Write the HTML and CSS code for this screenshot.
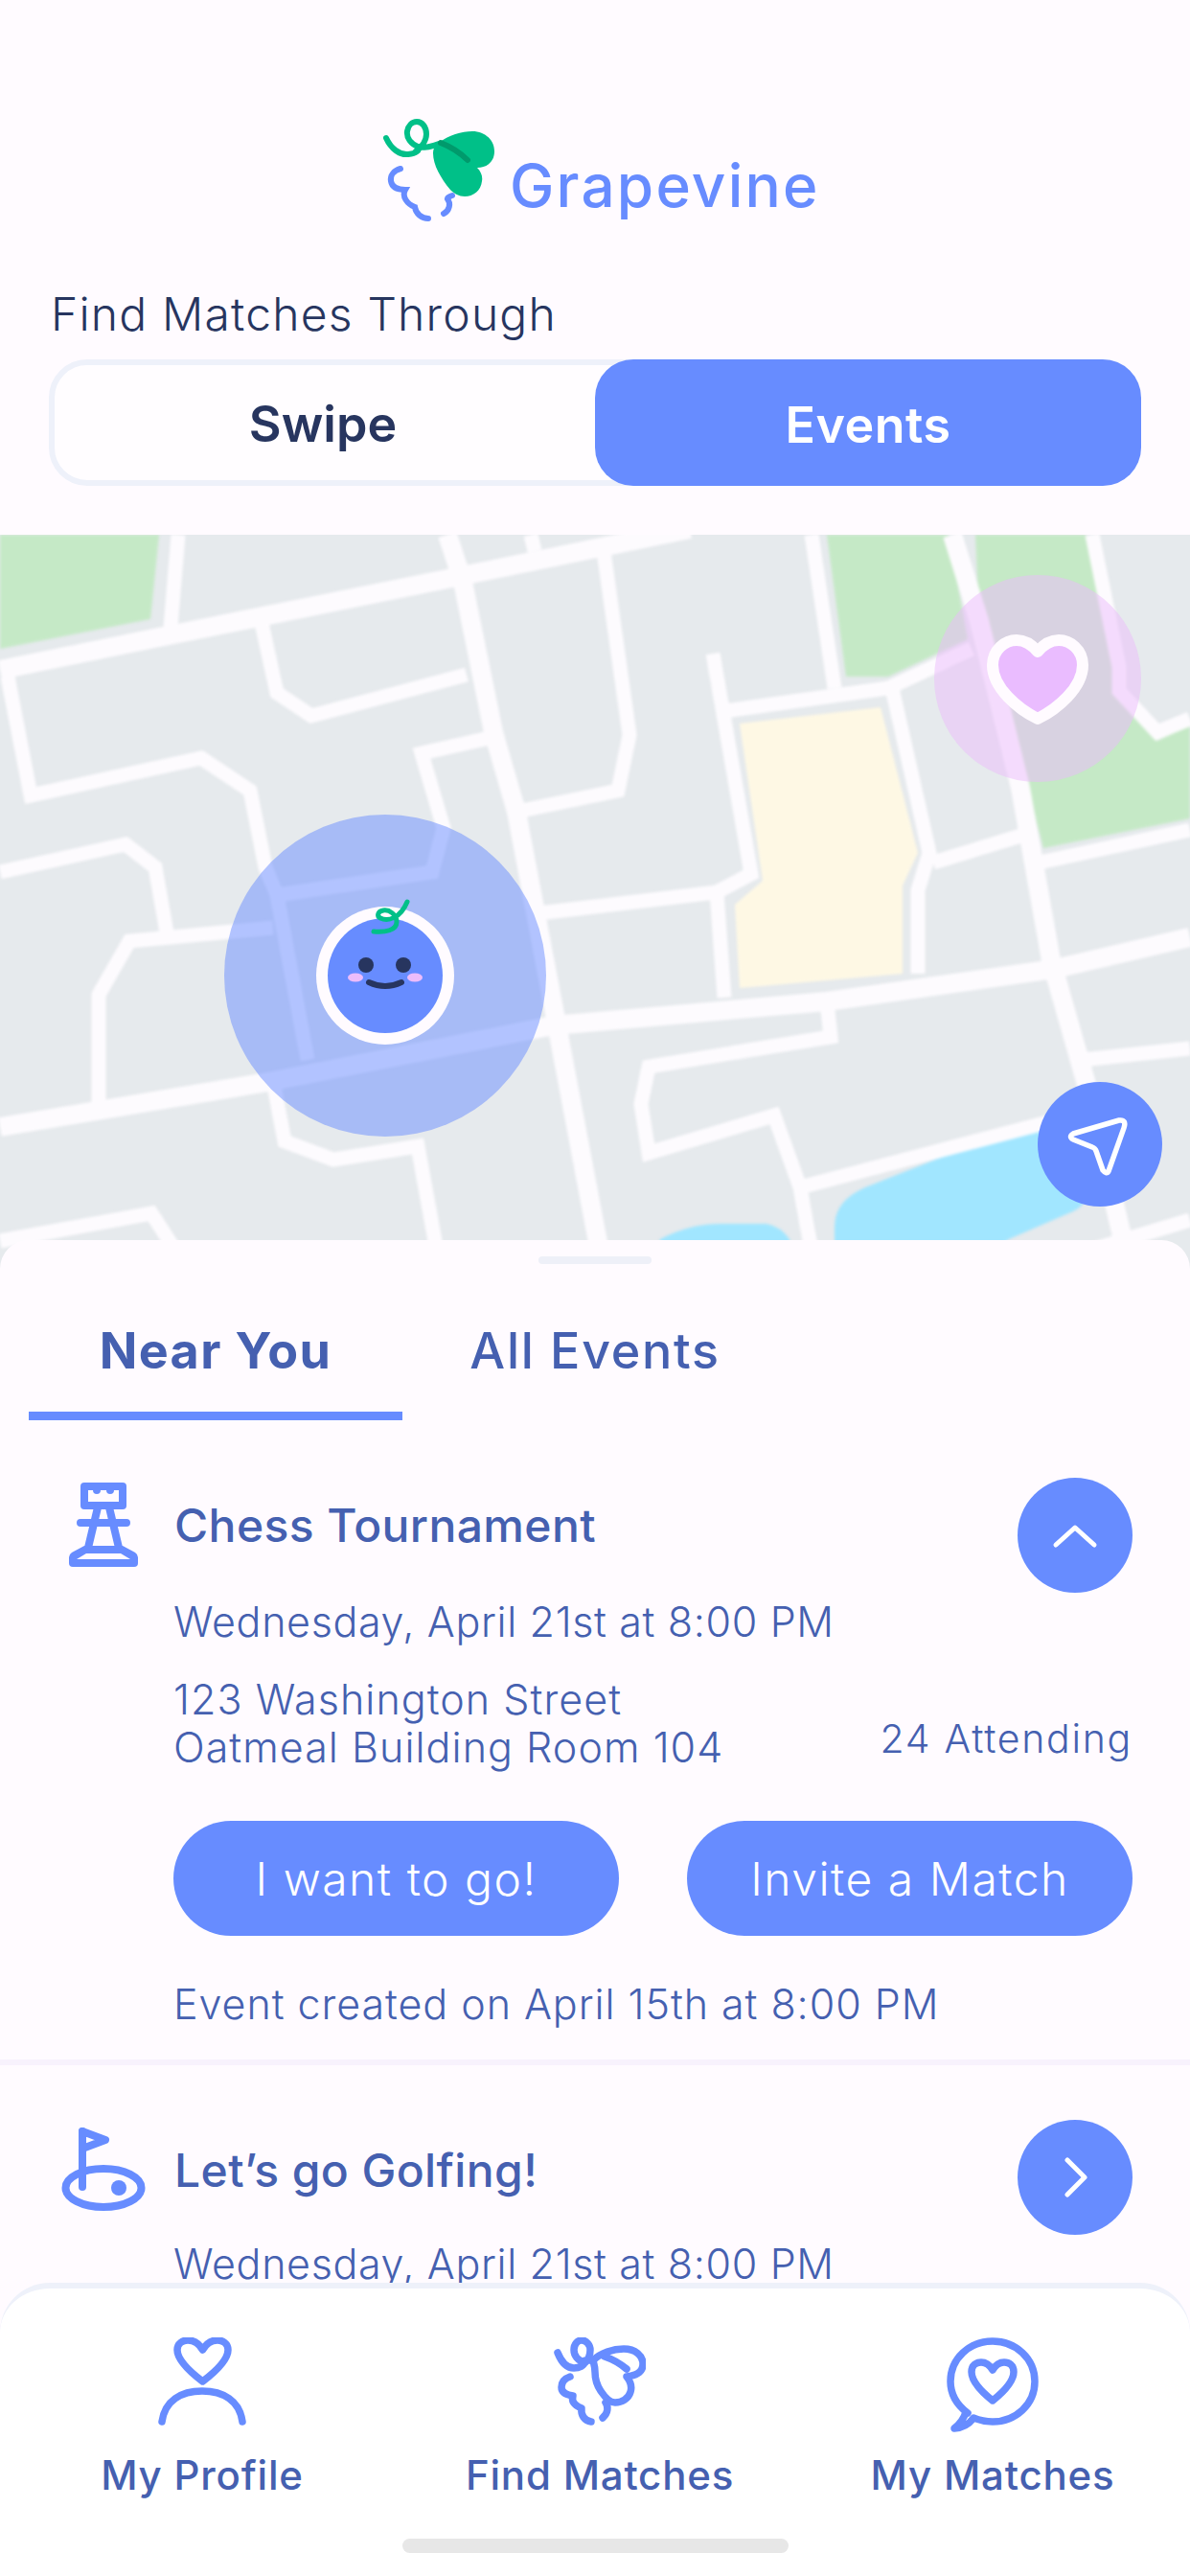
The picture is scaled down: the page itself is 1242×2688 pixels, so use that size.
FILE: index.html
```html
<!DOCTYPE html>
<html lang="en">
<head>
  <meta charset="UTF-8" />
  <meta name="viewport" content="width=device-width, initial-scale=1" />
  <title>Grapevine</title>
  <link rel="stylesheet" href="styles.css">
</head>
<body>
<div class="page">
  <header class="logo">
    <svg class="logo-mark" viewBox="0 0 120 115" width="120" height="115">
      <path class="vine" d="M3 24C8 35 17 42 26 41C34 40 39 37 36 33C29 30 24 24 25 17C26 11 30 7 35 7C41 7 45 13 45 20C45 28 38 35 34 38M38 33C44 35 50 33 58 30"/>
      <path class="leaf" d="M58 29C68 21 82 17 93 17C106 17 116 26 116 38C116 49 108 55 98 55C102 59 104 64 103 69C102 79 94 85 85 85C79 85 74 82 70 78C60 66 52 52 52 40C52 35 54 32 58 29Z"/>
      <path class="leaf-vein" d="M60 29C70 33 80 39 88 47"/>
      <path class="grape" d="M18 56C11 58 7 63 8 69C9 75 14 78 23 78C19 85 25 93 33 96C34 103 40 108 47 108M72 84C69 85 66 87 67 88C71 92 69 100 63 103"/>
    </svg>
    <span class="logo-text">Grapevine</span>
  </header>

  <p class="find-label">Find Matches Through</p>
  <div class="toggle">
    <button class="toggle-btn">Swipe</button>
    <button class="toggle-btn active">Events</button>
  </div>

  <section class="map">
    <svg class="map-art" viewBox="0 0 1242 770" width="1242" height="770">
      <g class="map-blur">
        <path class="park" d="M0 0H166L157 88L0 119Z"/>
        <path class="park" d="M863 0H990L1010 109L927 148H883Z"/>
        <path class="park" d="M1018 0H1133L1168 140V165L1208 215L1242 198V296L1089 327L1065 235L1022 90Z"/>
        <path class="plaza" d="M772 197L919 180L958 332L942 366V458L772 473L767 386L796 361Z"/>
        <path class="water" d="M871 770V722Q871 695 903 681L1133 590V690Q1133 700 1120 706L1053 735L1000 770Z"/>
        <path class="water" d="M680 770L689 735Q720 719 752 719H800Q815 722 824 735L830 770Z"/>
        <path class="road" d="M0 141L166 107L467 46L720 -6"/>
        <path class="road" d="M467 0L483 49L515 206L539 289L582 516L630 770"/>
        <path class="road thin" d="M554 0L558 17"/>
        <path class="road thin" d="M630 17L657 209L645 267L539 289"/>
        <path class="road thin" d="M186 0L178 97"/>
        <path class="road thin" d="M273 92L289 165L325 189L487 146"/>
        <path class="road thin" d="M8 148L32 272L210 233L261 267L277 347L289 376L321 548"/>
        <path class="road thin" d="M285 570L297 633L348 652L436 638L460 770"/>
        <path class="road thin" d="M0 352L131 323L162 347L174 415"/>
        <path class="road thin" d="M103 594V480L135 424L285 410"/>
        <path class="road thin" d="M515 211L440 228L463 306L451 352L289 376"/>
        <path class="road" d="M0 618L285 570L578 512L863 487L1101 453L1242 420"/>
        <path class="road thin" d="M562 395L748 373L784 354L744 124"/>
        <path class="road thin" d="M748 373L756 483"/>
        <path class="road thin" d="M756 184L927 160L974 138L1014 119"/>
        <path class="road thin" d="M847 0L871 160"/>
        <path class="road thin" d="M931 160L970 332L958 371V458"/>
        <path class="road thin" d="M974 342L1069 313"/>
        <path class="road" d="M994 0L1022 90L1065 264L1097 444L1133 570L1180 770"/>
        <path class="road thin" d="M1140 0L1168 138V163L1208 206L1242 192"/>
        <path class="road thin" d="M1085 342L1242 308"/>
        <path class="road thin" d="M1129 548L1242 536"/>
        <path class="road thin" d="M863 487L867 524L677 555L669 594L677 645L808 606L835 681L851 770"/>
        <path class="road thin" d="M835 681L1109 609"/>
        <path class="road thin" d="M0 737L158 708L198 770"/>
        <path class="road thin" d="M1061 770L1242 715"/>
      </g>
    </svg>

    <svg class="pin pin-me" viewBox="-170 -170 340 340" width="340" height="340">
      <circle class="me-halo" r="168"/>
      <circle class="me-ring" r="72"/>
      <circle class="me-face" r="60"/>
      <circle class="me-eye" cx="-20" cy="-11" r="8"/>
      <circle class="me-eye" cx="19" cy="-11" r="8"/>
      <ellipse class="me-cheek" cx="-31" cy="2" rx="8" ry="4.5"/>
      <ellipse class="me-cheek" cx="31" cy="2" rx="8" ry="4.5"/>
      <path class="me-smile" d="M-17 7Q0 15 17 7"/>
      <path class="me-vine" d="M-12 -46C0 -45 12 -47 12 -56C12 -64 4 -69 -2 -68C-8 -67 -9 -62 -5 -60C3 -56 16 -60 23 -77"/>
    </svg>

    <svg class="pin pin-heart" viewBox="-110 -110 220 220" width="220" height="220">
      <circle class="heart-halo" r="108"/>
      <path class="heart-shape" d="M0 42C-20 32 -47 10 -47 -14C-47 -30 -34 -40 -22 -40C-12 -40 -5 -34 0 -28C5 -34 12 -40 22 -40C34 -40 47 -30 47 -14C47 10 20 32 0 42Z"/>
    </svg>

    <button class="locate">
      <svg viewBox="-65 -65 130 130" width="130" height="130">
        <path class="locate-arrow" d="M-28 -11L20 -25Q28 -26 25 -17L9 28Q7 32 3 27L-4 7Q-5 4 -8 3L-28 -5Q-33 -8 -28 -11Z"/>
      </svg>
    </button>
  </section>

  <section class="sheet">
    <div class="handle"></div>
    <div class="tabs">
      <div class="tab active">Near You</div>
      <div class="tab">All Events</div>
    </div>

    <article class="event first">
      <div class="event-head">
        <svg class="event-icon rook" viewBox="0 0 72 88" width="72" height="88">
          <rect class="icon-solid" x="12" y="0" width="48" height="28" rx="4"/>
          <path class="icon-cut" d="M20 8H25A4 4 0 0 0 33 8H39A4 4 0 0 0 47 8H52V20H20Z"/>
          <path class="icon-line" d="M12 42H60M30 26L20 68M42 26L52 68"/>
          <path class="icon-solid" d="M16 66L3 73Q0 75 0 78V84Q0 88 4 88H68Q72 88 72 84V78Q72 75 69 73L56 66Z"/>
          <path class="icon-cut" d="M8 80L18 74H54L64 80Z"/>
        </svg>
        <h2 class="event-title">Chess Tournament</h2>
        <button class="round-btn">
          <svg viewBox="-30 -30 60 60" width="60" height="60"><path class="chevron" d="M-20 10L0 -8L20 10"/></svg>
        </button>
      </div>
      <div class="event-body">
        <p class="event-date">Wednesday, April 21st at 8:00 PM</p>
        <div class="event-where">
          <p class="event-address">123 Washington Street<br>Oatmeal Building Room 104</p>
          <p class="event-count">24 Attending</p>
        </div>
        <div class="event-actions">
          <button class="pill">I want to go!</button>
          <button class="pill">Invite a Match</button>
        </div>
        <p class="event-created">Event created on April 15th at 8:00 PM</p>
      </div>
    </article>

    <article class="event">
      <div class="event-head">
        <svg class="event-icon golf" viewBox="0 0 88 90" width="88" height="90">
          <ellipse class="icon-line" cx="44" cy="64" rx="39.5" ry="20"/>
          <path class="icon-line" d="M22 5V63"/>
          <path class="icon-line" d="M22 5L46 14L22 23Z"/>
          <circle class="icon-solid" cx="60" cy="64" r="8"/>
        </svg>
        <h2 class="event-title golf-title">Let’s go Golfing!</h2>
        <button class="round-btn">
          <svg viewBox="-30 -30 60 60" width="60" height="60"><path class="chevron" d="M-8 -18L10 0L-8 18"/></svg>
        </button>
      </div>
      <div class="event-body">
        <p class="event-date">Wednesday, April 21st at 8:00 PM</p>
      </div>
    </article>
  </section>

  <nav class="nav">
    <div class="nav-items">
      <a class="nav-item">
        <svg viewBox="0 0 92 100" width="92" height="100">
          <path class="nav-line" d="M46.5 46C36 38 20 24 20 13C20 6 26 3 31 3C38 3 43 7 46.5 13C50 7 55 3 62 3C67 3 73 6 73 13C73 24 57 38 46.5 46Z"/>
          <path class="nav-line" d="M4 88C7 66 24 56 46 56C68 56 85 66 88 88"/>
        </svg>
        <span>My Profile</span>
      </a>
      <a class="nav-item">
        <svg viewBox="0 0 96 100" width="96" height="100">
          <path class="nav-line" d="M4 16C8 26 14 32 21 32C27 32 32 29 32 26C25 24 21 19 21 13C21 7 25 3 29 3C34 3 38 8 38 13C38 19 36 23 33 26M33 24C36 24 39 24 41 24"/>
          <path class="nav-line" d="M41 24C49 16 62 12 73 12C85 12 93 19 93 28C93 37 85 40 76 41C80 46 82 51 80 57C78 64 71 68 64 68C58 68 53 62 49 56C45 50 43 42 43 36C43 31 42 28 41 24ZM53 20C62 23 70 28 76 33"/>
          <path class="nav-line" d="M17 41C11 43 8 47 8 52C8 57 13 60 20 61C18 67 22 71 29 74C28 81 32 87 39 88M54 68C57 72 57 79 51 84"/>
        </svg>
        <span>Find Matches</span>
      </a>
      <a class="nav-item">
        <svg viewBox="0 0 96 100" width="96" height="100">
          <path class="nav-line" d="M22 79C10 70 4 58 4 46C4 22 24 4 48 4C72 4 92 22 92 46C92 70 72 88 48 88C40 88 33 86 28 84C24 90 18 94 8 95C14 90 18 85 20 78"/>
          <path class="nav-line" d="M48 66C38 58 26 46 26 36C26 29 31 26 36 26C41 26 45 29 48 34C51 29 55 26 60 26C65 26 70 29 70 36C70 46 58 58 48 66Z"/>
        </svg>
        <span>My Matches</span>
      </a>
    </div>
    <div class="home-bar"></div>
  </nav>
</div>
</body>
</html>
```

FILE: styles.css
```css
body {
  margin: 0;
  background: #fffbff;
  font-family: Inter, "Open Sans", sans-serif;
  color: #4560b0;
}
p, h2 {
  margin: 0;
}
button {
  border: 0;
  padding: 0;
  font-family: inherit;
  cursor: pointer;
}
.page {
  width: 1242px;
  height: 2688px;
  display: flex;
  flex-direction: column;
  overflow: hidden;
}

/* logo */
.logo {
  display: flex;
  align-items: flex-start;
  padding: 120px 0 0 400px;
}
.logo-mark {
  flex: none;
}
.logo-text {
  margin: 43px 0 0 12px;
  font-size: 62px;
  line-height: 62px;
  font-weight: 500;
  letter-spacing: 2.2px;
  color: #678cff;
}
.vine, .grape, .leaf-vein {
  fill: none;
  stroke-width: 6;
  stroke-linecap: round;
}
.vine { stroke: #00c088; }
.grape { stroke: #678cff; }
.leaf { fill: #00c088; }
.leaf-vein { stroke: #009a6c; }

/* toggle */
.find-label {
  margin: 63px 0 17px 53px;
  font-size: 48px;
  line-height: 60px;
  font-weight: 300;
  letter-spacing: 1.2px;
  color: #27355f;
}
.toggle {
  box-sizing: border-box;
  display: flex;
  height: 132px;
  margin: 0 51px 51px;
  border: 6px solid #eef1fa;
  border-radius: 40px;
  background: #fffdff;
}
.toggle-btn {
  flex: 1;
  padding: 2px 4px 0 0;
  background: none;
  font-size: 52px;
  font-weight: 600;
  color: #27355f;
}
.toggle-btn.active {
  flex: none;
  width: 570px;
  margin: -6px -6px -6px 0;
  padding: 4px 0 0;
  border-radius: 40px;
  background: #678cff;
  color: #fff;
  letter-spacing: 0.5px;
}

/* map */
.map {
  position: relative;
  flex: none;
  height: 766px;
  background: #e6eaed;
  overflow: hidden;
}
.map-art {
  display: block;
}
.map-blur {
  filter: blur(1.5px);
}
.park { fill: #c5e9c6; }
.plaza { fill: #fef8e4; }
.water { fill: #a1e6ff; }
.road {
  fill: none;
  stroke: #fdfbfe;
  stroke-width: 20;
}
.road.thin {
  stroke-width: 15;
}
.pin {
  position: absolute;
}
.pin-me {
  left: 232px;
  top: 290px;
}
.pin-heart {
  left: 973px;
  top: 40px;
}
.me-halo { fill: rgba(103, 140, 255, 0.5); }
.me-ring { fill: #fffbff; }
.me-face { fill: #678cff; }
.me-eye { fill: #27355f; }
.me-cheek { fill: #ecbcfb; }
.me-smile {
  fill: none;
  stroke: #27355f;
  stroke-width: 6;
  stroke-linecap: round;
}
.me-vine {
  fill: none;
  stroke: #00c088;
  stroke-width: 5;
  stroke-linecap: round;
}
.heart-halo { fill: rgba(235, 188, 252, 0.5); }
.heart-shape {
  fill: #eabcff;
  stroke: #fffbff;
  stroke-width: 12;
  stroke-linejoin: round;
}
.locate {
  position: absolute;
  left: 1083px;
  top: 571px;
  width: 130px;
  height: 130px;
  border-radius: 50%;
  background: #678cff;
}
.locate svg {
  display: block;
}
.locate-arrow {
  fill: none;
  stroke: #fff;
  stroke-width: 5.5;
  stroke-linejoin: round;
}

/* sheet */
.sheet {
  position: relative;
  flex: 1;
  min-height: 0;
  margin-top: -30px;
  padding-top: 17px;
  border-radius: 30px 30px 0 0;
  background: #fffbff;
  overflow: hidden;
}
.handle {
  width: 118px;
  height: 8px;
  margin: 0 auto;
  border-radius: 4px;
  background: #eef0f8;
}
.tabs {
  display: flex;
  gap: 6px;
  margin: 60px 0 3px 30px;
}
.tab {
  box-sizing: border-box;
  width: 390px;
  padding-bottom: 32px;
  border-bottom: 9px solid transparent;
  text-align: center;
  font-size: 52px;
  line-height: 62px;
  font-weight: 500;
  letter-spacing: 1.7px;
}
.tab.active {
  border-bottom-color: #678cff;
  font-weight: 700;
  letter-spacing: 1.4px;
}
.event {
  padding: 57px 60px 0 0;
}
.event.first {
  padding-bottom: 30px;
  border-bottom: 6px solid #f8f2fd;
}
.event-head {
  display: flex;
  align-items: flex-start;
}
.event-icon {
  flex: none;
}
.event-icon.rook {
  margin: 5px 38px 0 72px;
}
.event-icon.golf {
  margin: 7px 30px 0 64px;
}
.event-title {
  margin-top: 19px;
  font-size: 48px;
  line-height: 62px;
  font-weight: 500;
  letter-spacing: 0.4px;
}
.event-title.golf-title {
  margin-top: 22px;
}
.round-btn {
  display: flex;
  align-items: center;
  justify-content: center;
  flex: none;
  width: 120px;
  height: 120px;
  margin-left: auto;
  border-radius: 50%;
  background: #678cff;
}
.chevron {
  fill: none;
  stroke: #fff;
  stroke-width: 5;
  stroke-linecap: round;
  stroke-linejoin: round;
}
.icon-line {
  fill: none;
  stroke: #678cff;
  stroke-width: 8;
  stroke-linecap: round;
  stroke-linejoin: round;
}
.icon-solid {
  fill: #678cff;
}
.icon-cut {
  fill: #fffbff;
}
.event-body {
  padding-left: 181px;
}
.event-date {
  margin-top: 2px;
  font-size: 43px;
  line-height: 56px;
  font-weight: 300;
  letter-spacing: 0.65px;
}
.event-where {
  display: flex;
  align-items: flex-end;
  justify-content: space-between;
  margin-top: 28px;
}
.event-address {
  font-size: 43px;
  line-height: 50px;
  font-weight: 300;
  letter-spacing: 1.05px;
}
.event-count {
  margin-bottom: 9px;
  font-size: 41px;
  line-height: 50px;
  font-weight: 300;
  letter-spacing: 1.7px;
}
.event-actions {
  display: flex;
  justify-content: space-between;
  margin-top: 52px;
}
.pill {
  width: 465px;
  height: 120px;
  border-radius: 60px;
  background: #678cff;
  color: #fff;
  font-size: 48px;
  font-weight: 300;
  letter-spacing: 1.5px;
}
.event-created {
  margin-top: 43px;
  font-size: 43px;
  line-height: 56px;
  font-weight: 300;
  letter-spacing: 0.95px;
}

/* bottom nav */
.nav {
  position: relative;
  flex: none;
  box-sizing: border-box;
  height: 306px;
  margin-top: -50px;
  padding-top: 51px;
  border-top: 6px solid #eef1fa;
  border-radius: 52px 52px 0 0;
  background: #fff;
}
.nav-items {
  display: grid;
  grid-template-columns: 422px 408px 412px;
}
.nav-item {
  display: flex;
  flex-direction: column;
  align-items: center;
  gap: 18px;
}
.nav-item span {
  font-size: 42px;
  line-height: 52px;
  font-weight: 500;
  letter-spacing: 0.8px;
}
.nav-line {
  fill: none;
  stroke: #678cff;
  stroke-width: 7.5;
  stroke-linecap: round;
  stroke-linejoin: round;
}
.home-bar {
  width: 403px;
  height: 15px;
  margin: 40px auto 0;
  border-radius: 8px;
  background: #e7e7e7;
}
```
